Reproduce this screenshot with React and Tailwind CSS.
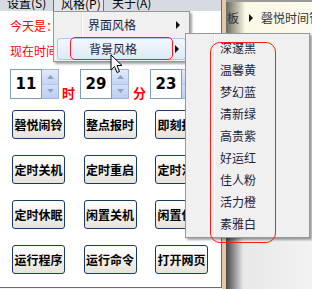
import React from 'react'

const buttons = ['磬悦闹铃', '整点报时', '即刻报时', '定时关机', '定时重启', '定时注销', '定时休眠', '闲置关机', '闲置休眠', '运行程序', '运行命令', '打开网页']
const colors = ['深邃黑', '温馨黄', '梦幻蓝', '清新绿', '高贵紫', '好运红', '佳人粉', '活力橙', '素雅白']

function Arrow({ down }) {
  return (
    <svg width="7" height="4" viewBox="0 0 7 4">
      <path d={down ? 'M0 0 L7 0 L3.5 4 Z' : 'M0 4 L7 4 L3.5 0 Z'} fill="#8da1c6" />
    </svg>
  )
}

function Spin({ value }) {
  return (
    <div className="flex h-[30px]">
      <div className="w-[32px] border border-[#7f9db9] bg-white flex items-center justify-center font-['DejaVu_Sans',sans-serif] font-bold text-[15px] text-black">
        {value}
      </div>
      <div className="w-[17px] flex flex-col border border-l-0 border-[#a3b6da]">
        <div className="flex-1 flex items-center justify-center bg-gradient-to-b from-[#e3ebfb] to-[#c4d4f4] border-b border-[#b4c5e7]">
          <Arrow />
        </div>
        <div className="flex-1 flex items-center justify-center bg-gradient-to-b from-[#d3dff8] to-[#bccef2]">
          <Arrow down />
        </div>
      </div>
    </div>
  )
}

function SubArrow() {
  return (
    <svg width="4" height="8" viewBox="0 0 4 8">
      <path d="M0 0 L4 4 L0 8 Z" fill="#111" />
    </svg>
  )
}

export default function App() {
  return (
    <div className="relative w-[312px] h-[289px] overflow-hidden bg-[#f4f4f4] flex font-['Noto_Sans_CJK_SC',sans-serif]">
      {/* main window */}
      <div className="w-[222px] h-[288px] shrink-0 bg-white border-r border-b border-[#6b6b6b] flex flex-col">
        <div className="h-[11px] overflow-hidden bg-[#d7dbe1] flex text-[12px] leading-[13px] text-black whitespace-nowrap">
          <span className="-mt-[4px] ml-[7px] w-[46px]">设置(S)</span>
          <span className="-mt-[4px] w-[51px] h-[16px] border border-[#6d6d6d] bg-[#e2e5ea] pl-[7px]">风格(P)</span>
          <span className="-mt-[4px] ml-[8px]">关于(A)</span>
        </div>
        <div className="pl-[10px] flex flex-col">
          <div className="mt-[8px] text-[12px] leading-[14px] text-[#ff0000]">今天是：2014年3月</div>
          <div className="mt-[11px] text-[12px] leading-[14px] text-[#ff0000]">现在时间：11:29:23</div>
          <div className="mt-[11px] flex items-end">
            <Spin value="11" />
            <span className="ml-[3px] mb-[-1px] text-[13px] leading-[15px] font-bold text-[#ff0000]">时</span>
            <div className="ml-[5px]"><Spin value="29" /></div>
            <span className="ml-[4px] mb-[-1px] text-[13px] leading-[15px] font-bold text-[#ff0000]">分</span>
            <div className="ml-[4px]"><Spin value="23" /></div>
          </div>
          <div className="mt-[11px] ml-[2px] grid grid-cols-[53px_53px_53px] gap-x-[18.5px] gap-y-[16px]">
            {buttons.map(b => (
              <div
                key={b}
                className="h-[29px] rounded-[3px] border-[1.5px] border-[#1c3a66] bg-gradient-to-b from-white to-[#e6e3da] flex items-center justify-center text-[12px] font-bold text-black whitespace-nowrap overflow-hidden"
              >
                {b}
              </div>
            ))}
          </div>
        </div>
      </div>
      {/* window edge */}
      <div className="w-[4px] h-[289px] shrink-0 bg-[#e6c8a8]" />
      {/* background window */}
      <div className="flex-1 flex flex-col">
        <div className="h-[33px] border-t-2 border-[#9a9a9a] bg-gradient-to-r from-[#6a6a60] via-[#fbf8e6] via-[18%] to-[#fdfbee] flex items-center text-[12px] text-[#333] whitespace-nowrap">
          <span className="ml-[1px]">板</span>
          <span className="ml-[10px]"><SubArrow /></span>
          <span className="ml-[8px]">磬悦时间管理</span>
        </div>
        <div className="flex-1 bg-gradient-to-r from-[#4a4a4a] via-[#e8e8e8] via-[16%] to-[#f6f6f6]" />
      </div>

      {/* 风格 dropdown */}
      <div className="absolute left-[53px] top-[11px] w-[137px] h-[51px] bg-[#f0f0f0] border border-[#979797] shadow-[2px_2px_2px_rgba(0,0,0,0.35)] text-[12px] text-[#1e1e3c]">
        <div className="absolute left-[27px] top-0 bottom-0 w-[2px] border-l border-[#e2e3e3] border-r border-r-white" />
        <div className="relative flex flex-col pt-[2px] gap-[2px]">
          <div className="h-[22px] flex items-center pl-[34px] pr-[9px] justify-between">
            <span>界面风格</span>
            <SubArrow />
          </div>
          <div className="mx-[3px] h-[22px] flex items-center pl-[31px] pr-[6px] justify-between rounded-[3px] border border-[#a8c8ee] bg-gradient-to-b from-[#f2f7fd] to-[#dceaf9]">
            <span>背景风格</span>
            <SubArrow />
          </div>
        </div>
        <div className="absolute left-[16px] top-[25px] w-[103px] h-[23px] rounded-[5px] border-[1.5px] border-[#ff1a1a]" />
      </div>

      {/* 背景风格 submenu */}
      <div className="absolute left-[185px] top-[33px] w-[125px] h-[205px] bg-[#f0f0f0] border border-[#979797] shadow-[2px_2px_2px_rgba(0,0,0,0.35)] text-[12px] text-[#1e1e3c]">
        <div className="absolute left-[27px] top-0 bottom-0 w-[2px] border-l border-[#e2e3e3] border-r border-r-white" />
        <div className="relative flex flex-col pt-[3px]">
          {colors.map(c => (
            <div key={c} className="h-[22px] flex items-center pl-[34px]">{c}</div>
          ))}
        </div>
        <div className="absolute left-[24px] top-[8px] w-[66px] h-[201px] rounded-[10px] border-[1.5px] border-[#ff1a1a]" />
      </div>

      {/* cursor */}
      <svg className="absolute left-[110px] top-[54px]" width="13" height="20" viewBox="0 0 13 20">
        <path d="M1 1 L1 16 L4.5 12.5 L7 18.5 L9.5 17.5 L7 11.5 L12 11.5 Z" fill="white" stroke="black" strokeWidth="1" strokeLinejoin="round" />
      </svg>
    </div>
  )
}
